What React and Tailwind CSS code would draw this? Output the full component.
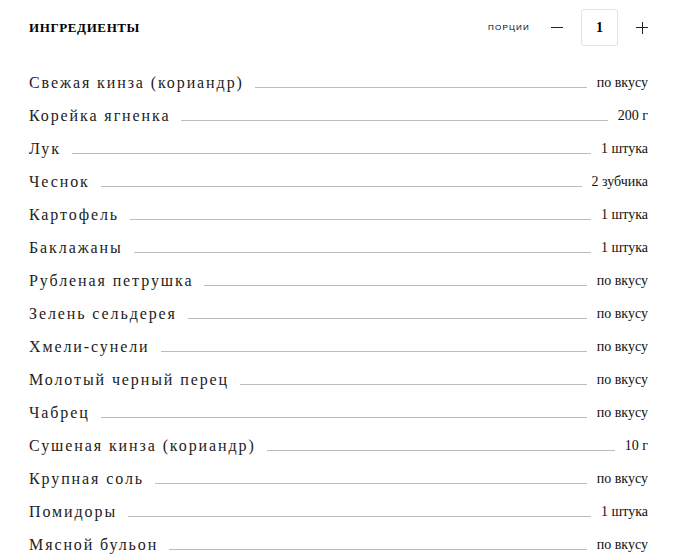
import { useState } from "react";

const items = [
  ["Свежая кинза (кориандр)", "по вкусу"],
  ["Корейка ягненка", "200 г"],
  ["Лук", "1 штука"],
  ["Чеснок", "2 зубчика"],
  ["Картофель", "1 штука"],
  ["Баклажаны", "1 штука"],
  ["Рубленая петрушка", "по вкусу"],
  ["Зелень сельдерея", "по вкусу"],
  ["Хмели-сунели", "по вкусу"],
  ["Молотый черный перец", "по вкусу"],
  ["Чабрец", "по вкусу"],
  ["Сушеная кинза (кориандр)", "10 г"],
  ["Крупная соль", "по вкусу"],
  ["Помидоры", "1 штука"],
  ["Мясной бульон", "по вкусу"],
];

export default function App() {
  const [portions, setPortions] = useState(1);

  return (
    <div className="min-h-[555px] bg-white pl-[29px] pr-[26px] text-[#222] font-[family-name:Liberation_Serif,serif]">
      {/* header */}
      <div className="flex h-[54px] items-center justify-between pt-[1px]">
        <h2 className="text-[13px] font-bold tracking-[0.6px] text-black">ИНГРЕДИЕНТЫ</h2>
        <div className="flex items-center">
          <span className="mr-[21px] font-[family-name:Liberation_Sans,sans-serif] text-[8px] uppercase tracking-[1.2px] text-black">порции</span>
          <button onClick={() => setPortions(p => Math.max(1, p - 1))}
            className="flex h-[20px] w-[12px] items-center justify-center">
            <span className="block h-[1px] w-[12px] bg-[#222]" />
          </button>
          <div className="ml-[18px] flex h-[37px] w-[37px] items-center justify-center rounded-[3px] border border-[#e2e2e2] text-[14px] font-bold text-black">
            {portions}
          </div>
          <button onClick={() => setPortions(p => p + 1)}
            className="relative ml-[18px] flex h-[12px] w-[12px] items-center justify-center">
            <span className="absolute h-[1px] w-[12px] bg-[#222]" />
            <span className="absolute h-[12px] w-[1px] bg-[#222]" />
          </button>
        </div>
      </div>

      {/* list */}
      <ul className="mt-[12px]">
        {items.map(([name, qty]) => (
          <li key={name} className="flex h-[33px] items-end pb-[7px]">
            <span className="text-[16px] leading-[18px] tracking-[1.9px] text-[#222]">{name}</span>
            <span className="mb-[4px] ml-[11px] mr-[10px] flex-1 border-b border-[#bdbdbd]" />
            <span className="text-[14px] leading-[18px] text-[#111]">{qty}</span>
          </li>
        ))}
      </ul>
    </div>
  );
}
